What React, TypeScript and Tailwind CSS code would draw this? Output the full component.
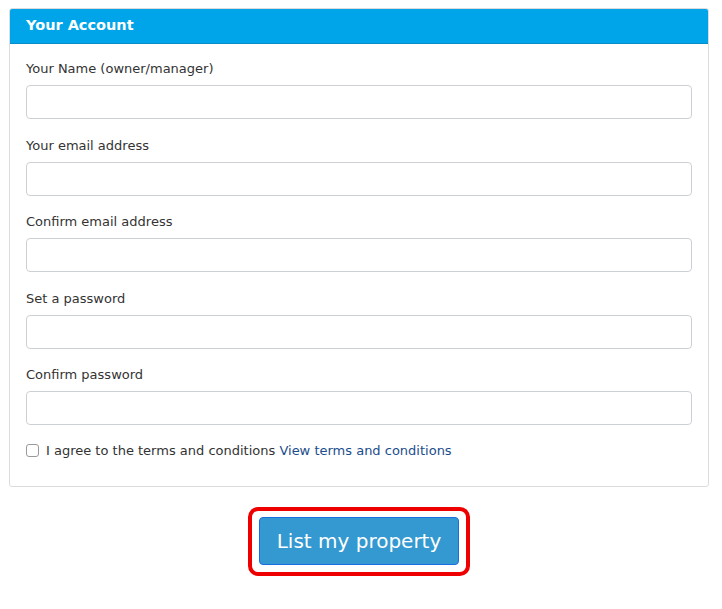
import React from 'react';

const fields = [
  'Your Name (owner/manager)',
  'Your email address',
  'Confirm email address',
  'Set a password',
  'Confirm password',
];

const App: React.FC = () => {
  return (
    <div
      className="w-[722px] h-[609px] bg-white pt-[8px] text-[13px] text-[#333]"
      style={{ fontFamily: '"DejaVu Sans", Verdana, sans-serif' }}
    >
      <div className="ml-[9px] w-[700px] border border-[#dcdcdc] rounded-[3px] overflow-hidden">
        <div className="h-[35px] bg-[#00a5e9] border-b border-[#0a8cc8] flex items-center px-[16px]">
          <span className="text-white font-bold text-[14.5px]">Your Account</span>
        </div>
        <div className="px-[16px] pt-[15px] pb-[25px]">
          {fields.map((label) => (
            <div key={label} className="mb-[16.5px]">
              <div className="leading-[20px] mb-[6px]">{label}</div>
              <input
                type="text"
                className="block w-full h-[34px] border border-[#ccd0d4] rounded-[4px] bg-white outline-none"
              />
            </div>
          ))}
          <div className="flex items-center -mt-[1px] leading-[20px]">
            <span className="w-[13px] h-[13px] border border-[#9a9a9a] rounded-[3px] bg-white mr-[7px]" />
            <span>I agree to the terms and conditions&nbsp;</span>
            <a className="text-[#1b4d8c]">View terms and conditions</a>
          </div>
        </div>
      </div>
      <div className="flex justify-center ml-[9px] w-[700px] mt-[20px]">
        <div className="border-[4px] border-[#ee0000] rounded-[10px] px-[7px] pt-[6px] pb-[7px]">
          <button className="block w-[200px] h-[48px] bg-[#3399d0] border border-[#1b6ee0] rounded-[4px] text-white text-[20px]">
            List my property
          </button>
        </div>
      </div>
    </div>
  );
};

export default App;
